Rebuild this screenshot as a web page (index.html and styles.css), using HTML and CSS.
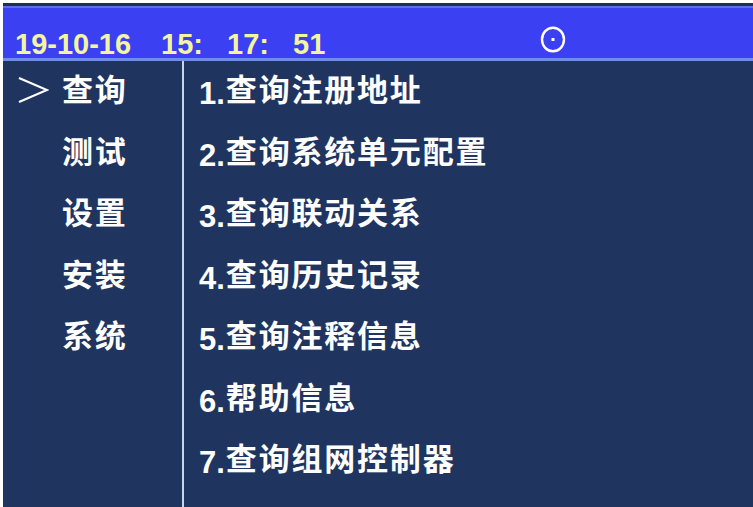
FILE: index.html
```html
<!DOCTYPE html>
<html lang="zh-CN">
<head>
<meta charset="utf-8">
<title>查询</title>
<link rel="stylesheet" href="styles.css">
</head>
<body>
<div class="screen">
  <header class="topbar">
    <span class="date">19-10-16</span>
    <span class="time">15: 17: 51</span>
    <svg class="status" width="26" height="27" viewBox="0 0 26 27" aria-hidden="true">
      <ellipse cx="13" cy="13.5" rx="11" ry="11.8" fill="none" stroke="#ffffff" stroke-width="2.4"/>
      <rect x="11.5" y="12" width="3" height="3" fill="#ffffff"/>
    </svg>
  </header>
  <main class="body">
    <nav class="menu">
      <div class="menu-item active">
        <svg class="arrow" width="32" height="28" viewBox="0 0 32 28" aria-hidden="true">
          <polyline points="2,2 30,14 2,26" fill="none" stroke="#ffffff" stroke-width="2.2"/>
        </svg>
        <span class="label">查询</span>
      </div>
      <div class="menu-item"><span class="label">测试</span></div>
      <div class="menu-item"><span class="label">设置</span></div>
      <div class="menu-item"><span class="label">安装</span></div>
      <div class="menu-item"><span class="label">系统</span></div>
    </nav>
    <div class="divider"></div>
    <ul class="options">
      <li><span class="num">1.</span>查询注册地址</li>
      <li><span class="num">2.</span>查询系统单元配置</li>
      <li><span class="num">3.</span>查询联动关系</li>
      <li><span class="num">4.</span>查询历史记录</li>
      <li><span class="num">5.</span>查询注释信息</li>
      <li><span class="num">6.</span>帮助信息</li>
      <li><span class="num">7.</span>查询组网控制器</li>
    </ul>
  </main>
</div>
</body>
</html>
```

FILE: styles.css
```css
html, body {
  margin: 0;
  padding: 0;
  background: #ffffff;
}

body {
  width: 753px;
  height: 507px;
  overflow: hidden;
  font-family: "Liberation Sans", "Noto Sans CJK SC", sans-serif;
}

.screen {
  margin: 3px 0 0 3px;
  height: 504px;
  display: flex;
  flex-direction: column;
  background: #1f3560;
}

.topbar {
  box-sizing: border-box;
  height: 58px;
  border-top: 3px solid #1d2f52;
  border-bottom: 3px solid #6f8fe6;
  background: #3b41f3;
  box-shadow: inset 0 2px 0 #5d6ff0;
  display: flex;
  align-items: flex-start;
  padding: 24px 0 0 12px;
  color: #f3f5a0;
  font-weight: bold;
  font-size: 29px;
  line-height: 29px;
  white-space: pre;
}

.time {
  margin-left: 30px;
  word-spacing: 16px;
}

.status {
  margin-left: 215px;
  margin-top: -4px;
  flex: none;
}

.body {
  flex: 1;
  display: flex;
  min-height: 0;
}

.menu {
  width: 179px;
  display: flex;
  flex-direction: column;
}

.menu-item {
  box-sizing: border-box;
  height: 61.5px;
  line-height: 59.5px;
  padding-left: 59px;
  position: relative;
  color: #ffffff;
  font-weight: bold;
  font-size: 31px;
  letter-spacing: 1.8px;
}

.arrow {
  position: absolute;
  left: 14px;
  top: 15px;
}

.divider {
  width: 2px;
  background: #c9d5ef;
}

.options {
  list-style: none;
  margin: 0;
  padding: 0 0 0 15px;
  display: flex;
  flex-direction: column;
}

.options li {
  box-sizing: border-box;
  height: 61.5px;
  line-height: 59.5px;
  color: #ffffff;
  font-weight: bold;
  font-size: 31px;
  letter-spacing: 1.8px;
  white-space: nowrap;
}

.num {
  letter-spacing: 0;
  margin-right: 1px;
  vertical-align: -3px;
}
```
